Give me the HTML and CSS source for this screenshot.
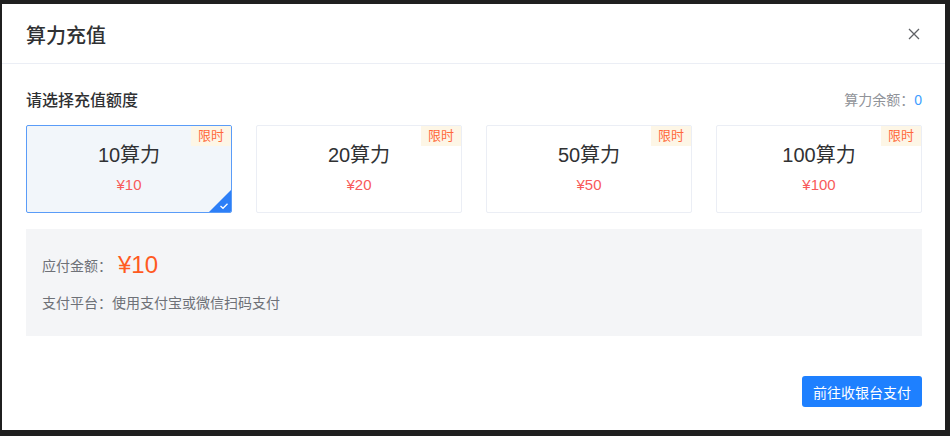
FILE: index.html
```html
<!DOCTYPE html>
<html lang="zh-CN">
<head>
    <meta charset="UTF-8">
    <title>算力充值</title>
    <link rel="stylesheet" href="styles.css">
</head>
<body>

    <div class="dialog">
        <div class="dialog-header">
            <span class="dialog-title">算力充值</span>
            <button class="dialog-close" aria-label="关闭">
                <svg width="12" height="12" viewBox="0 0 12 12"><path d="M1 1L11 11M11 1L1 11" stroke="#606266" stroke-width="1.3" fill="none"/></svg>
            </button>
        </div>

        <div class="dialog-body">
            <div class="section-row">
                <span class="section-title">请选择充值额度</span>
                <span class="balance">算力余额：<em>0</em></span>
            </div>

            <div class="plans">
                <div class="plan active">
                    <span class="plan-tag">限时</span>
                    <div class="plan-name">10算力</div>
                    <div class="plan-price">¥10</div>
                    <svg class="plan-check" width="22" height="22" viewBox="0 0 22 22">
                        <path d="M22 0V22H0Z" fill="#2d7ff7"/>
                        <path d="M11.5 16L14 18.3L18.5 13.8" stroke="#fff" stroke-width="1.3" fill="none"/>
                    </svg>
                </div>
                <div class="plan">
                    <span class="plan-tag">限时</span>
                    <div class="plan-name">20算力</div>
                    <div class="plan-price">¥20</div>
                </div>
                <div class="plan">
                    <span class="plan-tag">限时</span>
                    <div class="plan-name">50算力</div>
                    <div class="plan-price">¥50</div>
                </div>
                <div class="plan">
                    <span class="plan-tag">限时</span>
                    <div class="plan-name">100算力</div>
                    <div class="plan-price">¥100</div>
                </div>
            </div>

            <div class="summary">
                <div class="summary-row">
                    <span class="summary-label">应付金额：</span>
                    <span class="summary-amount">¥10</span>
                </div>
                <div class="summary-row pay-way">
                    <span class="summary-label">支付平台：</span>
                    <span>使用支付宝或微信扫码支付</span>
                </div>
            </div>
        </div>

        <div class="dialog-footer">
            <button class="btn-primary">前往收银台支付</button>
        </div>
    </div>

</body>
</html>
```

FILE: styles.css
```css
body {
    margin: 0;
    padding: 4px 5px 0 2px;
    background: #1f1f1f;
    font-family: "Liberation Sans", "Noto Sans CJK SC", sans-serif;
    color: #303133;
}

.dialog {
    width: 943px;
    height: 426px;
    background: #fff;
    display: flex;
    flex-direction: column;
}

.dialog-header {
    box-sizing: border-box;
    height: 60px;
    border-bottom: 1px solid #ebeef5;
    display: flex;
    align-items: center;
    justify-content: space-between;
    padding: 1px 25px 0 24px;
}
.dialog-title { font-size: 20px; font-weight: 500; color: #303133; }
.dialog-close {
    border: 0;
    background: none;
    padding: 0;
    width: 12px;
    height: 12px;
    display: flex;
    cursor: pointer;
}

.dialog-body { padding: 24px 23px 0 24px; }

.section-row {
    display: flex;
    justify-content: space-between;
    align-items: center;
    height: 22px;
}
.section-title { font-size: 16px; font-weight: 500; color: #303133; }
.balance { font-size: 14px; color: #909399; }
.balance em { font-style: normal; color: #409eff; }

.plans {
    display: grid;
    grid-template-columns: repeat(4, 1fr);
    gap: 24px;
    margin-top: 15px;
}
.plan {
    position: relative;
    height: 86px;
    border: 1px solid #ebeef5;
    border-radius: 2px;
    text-align: center;
    overflow: hidden;
    cursor: pointer;
}
.plan.active {
    border-color: #5a9cf8;
    background: #f2f6fa;
}
.plan-tag {
    position: absolute;
    top: 0;
    right: 0;
    width: 40px;
    height: 20px;
    line-height: 20px;
    font-size: 13px;
    color: #ff6a3b;
    background: #fdf6e6;
}
.plan-name {
    margin-top: 17px;
    font-size: 20px;
    line-height: 24px;
    color: #303133;
}
.plan-price {
    margin-top: 8px;
    font-size: 15px;
    line-height: 20px;
    color: #f85a5a;
}
.plan-check {
    position: absolute;
    right: 0;
    bottom: 0;
}

.summary {
    margin-top: 16px;
    background: #f4f5f7;
    padding: 20px 16px 24px;
}
.summary-row {
    display: flex;
    align-items: center;
    font-size: 14px;
    color: #6e7177;
    height: 32px;
}
.summary-label { margin-right: 6px; }
.summary-amount { font-size: 24px; color: #ff5a1f; }
.pay-way { height: 20px; margin-top: 11px; }
.pay-way .summary-label { margin-right: 0; }

.dialog-footer {
    display: flex;
    justify-content: flex-end;
    padding: 40px 23px 0 24px;
}
.btn-primary {
    width: 120px;
    height: 31px;
    border: 0;
    border-radius: 3px;
    background: #1e80ff;
    color: #fff;
    font-family: inherit;
    font-size: 14px;
    cursor: pointer;
}
```
